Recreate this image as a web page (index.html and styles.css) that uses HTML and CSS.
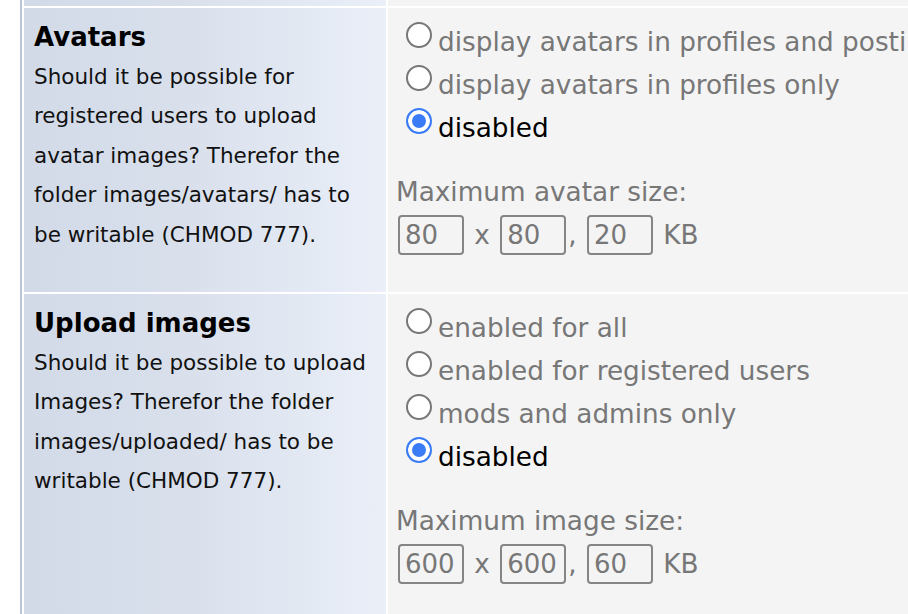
FILE: index.html
```html
<!DOCTYPE html>
<html lang="en">
<head>
<meta charset="utf-8">
<title>Settings</title>
<link rel="stylesheet" href="styles.css">
</head>
<body>
<table class="settings">
  <colgroup>
    <col class="col-label">
    <col class="col-value">
  </colgroup>
  <tr class="stub">
    <td class="label"></td>
    <td class="value"></td>
  </tr>
  <tr>
    <td class="label">
      <div class="title">Avatars</div>
      <div class="desc">Should it be possible for registered users to upload avatar images? Therefor the folder images/avatars/ has to be writable (CHMOD 777).</div>
    </td>
    <td class="value">
      <label class="opt"><input class="radio" type="radio" name="avatars">display avatars in profiles and postings</label>
      <label class="opt"><input class="radio" type="radio" name="avatars">display avatars in profiles only</label>
      <label class="opt on"><input class="radio" type="radio" name="avatars" checked>disabled</label>
      <div class="maxlabel">Maximum avatar size:</div>
      <div class="sizes"><input class="num" type="text" value="80" readonly> x <input class="num" type="text" value="80" readonly>, <input class="num" type="text" value="20" readonly> KB</div>
    </td>
  </tr>
  <tr>
    <td class="label">
      <div class="title">Upload images</div>
      <div class="desc">Should it be possible to upload Images? Therefor the folder images/uploaded/ has to be writable (CHMOD 777).</div>
    </td>
    <td class="value">
      <label class="opt"><input class="radio" type="radio" name="upload">enabled for all</label>
      <label class="opt"><input class="radio" type="radio" name="upload">enabled for registered users</label>
      <label class="opt"><input class="radio" type="radio" name="upload">mods and admins only</label>
      <label class="opt on"><input class="radio" type="radio" name="upload" checked>disabled</label>
      <div class="maxlabel">Maximum image size:</div>
      <div class="sizes"><input class="num" type="text" value="600" readonly> x <input class="num" type="text" value="600" readonly>, <input class="num" type="text" value="60" readonly> KB</div>
    </td>
  </tr>
</table>
</body>
</html>
```

FILE: styles.css
```css
html, body {
  margin: 0;
  padding: 0;
  background: #ffffff;
  overflow: hidden;
}

body {
  font-family: "DejaVu Sans", Verdana, sans-serif;
  color: #000;
  width: 1100px;
}

.settings {
  border-collapse: separate;
  border-spacing: 2px;
  border-left: 2px solid #b9c6da;
  margin-left: 20px;
  margin-top: -2px;
  table-layout: fixed;
  width: 990px;
}

.col-label {
  width: 362px;
}

.col-value {
  width: 620px;
}

.settings td {
  box-sizing: border-box;
  vertical-align: top;
  padding: 0;
}

.stub td {
  height: 6px;
}

.label {
  background: linear-gradient(to right, #d2dae8 0%, #d9e0ec 45%, #eaeff8 100%);
}

.settings .label {
  padding: 9px 10px 0 10px;
}

.value {
  background: #f4f4f4;
  white-space: nowrap;
  font-size: 26.3px;
  color: #777777;
  overflow: hidden;
}

.settings .value {
  padding: 13px 0 35px 8px;
}

.settings .stub td {
  padding: 0;
}

.title {
  font-size: 26px;
  font-weight: bold;
  line-height: 37.5px;
  margin-top: 2px;
}

.desc {
  font-size: 21.5px;
  line-height: 39.5px;
  color: #111;
}

.opt {
  display: block;
  line-height: 43px;
  height: 43px;
}

.opt.on {
  color: #000;
}

.radio {
  appearance: none;
  -webkit-appearance: none;
  box-sizing: border-box;
  width: 26px;
  height: 26px;
  margin: 0 6px 0 10px;
  border: 2px solid #777777;
  border-radius: 50%;
  background: #ffffff;
  vertical-align: 3px;
  display: inline-block;
}

.radio:checked {
  border-color: #3a7cf6;
  background: #3a7cf6;
  box-shadow: inset 0 0 0 4px #ffffff;
}

.maxlabel {
  margin-top: 21px;
  line-height: 43px;
}

.sizes {
  line-height: 43px;
}

.num {
  box-sizing: border-box;
  width: 66px;
  height: 40px;
  margin: 0 2px;
  padding: 0 0 0 5px;
  border: 2px solid #858585;
  border-radius: 4px;
  background: transparent;
  font-family: "DejaVu Sans", Verdana, sans-serif;
  font-size: 26px;
  color: #777777;
  vertical-align: baseline;
  outline: none;
}
```
